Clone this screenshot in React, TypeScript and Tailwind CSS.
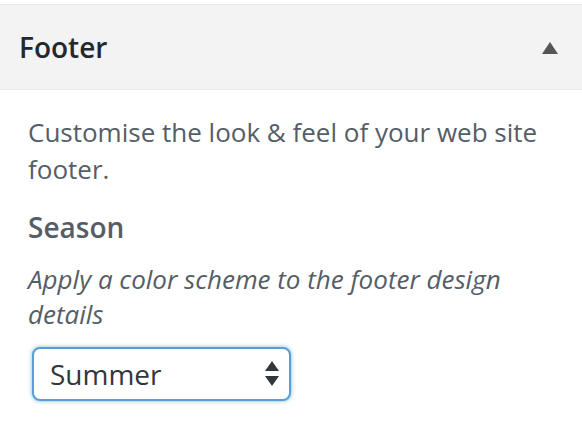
import { ChangeEvent, useState } from 'react'

export default function App() {
  const [season, setSeason] = useState('summer')

  return (
    <div className="w-[582px] h-[428px] bg-white pt-[4px] overflow-hidden" style={{ fontFamily: '"Open Sans", sans-serif' }}>
      <div className="h-[86px] bg-[#f3f3f3] border-y border-[#e8e8e8] flex items-center justify-between pl-[19px] pr-[24px]">
        <h3 className="text-[28px] font-semibold text-[#23282d] leading-none">Footer</h3>
        <svg width="16" height="12" viewBox="0 0 16 12" className="mt-[1px]">
          <path d="M8 0 L16 12 L0 12 Z" fill="#555" />
        </svg>
      </div>

      <div className="px-[28px] pt-[24px]">
        <p className="text-[26px] leading-[37px] text-[#555d66]">
          Customise the look &amp; feel of your web site footer.
        </p>
        <div className="mt-[21px] text-[28px] leading-[36px] font-semibold text-[#555d66]">Season</div>
        <p className="mt-[17px] text-[26px] leading-[35px] italic text-[#555d66] pr-[40px]">
          Apply a color scheme to the footer design details
        </p>
        <div className="relative mt-[15px] ml-[4px] w-[259px] h-[54px]">
          <select
            value={season}
            onChange={(e: ChangeEvent<HTMLSelectElement>) => setSeason(e.target.value)}
            className="appearance-none w-full h-full bg-white border-2 border-[#5b9dd9] rounded-[8px] shadow-[0_0_4px_rgba(30,140,190,0.6)] pl-[16px] text-[28px] text-[#32373c] outline-none"
            style={{ fontFamily: '"Open Sans", sans-serif' }}
          >
            <option value="summer">Summer</option>
            <option value="autumn">Autumn</option>
            <option value="winter">Winter</option>
            <option value="spring">Spring</option>
          </select>
          <svg width="14" height="26" viewBox="0 0 14 26" className="absolute right-[12px] top-[14px] pointer-events-none">
            <path d="M7 0 L14 10 L0 10 Z" fill="#32373c" />
            <path d="M0 15 L14 15 L7 25 Z" fill="#32373c" />
          </svg>
        </div>
      </div>
    </div>
  )
}
